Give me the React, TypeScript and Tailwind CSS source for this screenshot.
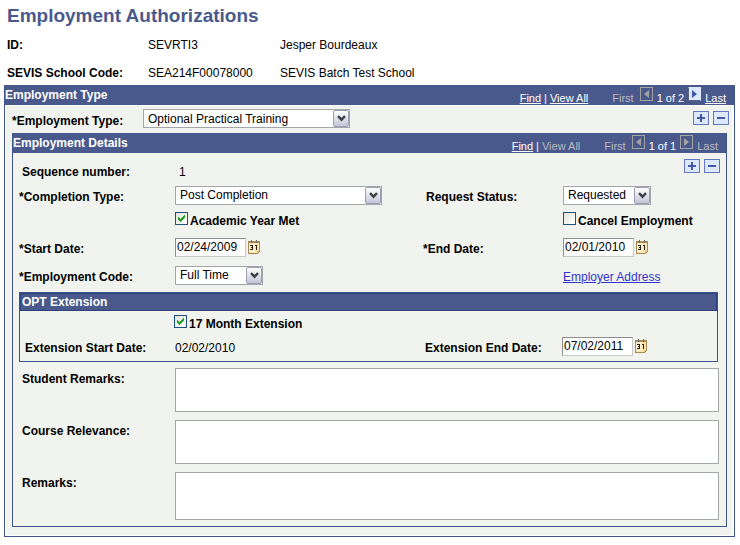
import type { ReactNode } from "react";

const LABEL = "font-bold leading-4";

type SelectFieldProps = {
  id: string;
  options: string[];
  className: string;
};

function SelectField({ id, options, className }: SelectFieldProps) {
  return (
    <div className={`relative h-[19px] ${className}`}>
      <select
        id={id}
        className="block h-full w-full appearance-none border border-[#a2a6ab] bg-white pl-1 pr-5 text-[12px] leading-4 outline-none"
      >
        {options.map((o) => (
          <option key={o}>{o}</option>
        ))}
      </select>
      <span className="pointer-events-none absolute inset-y-px right-px flex w-4 items-center justify-center rounded-xs border border-[#9b9db3] bg-linear-to-b from-white to-[#c4c5d6]">
        <svg width="9" height="7" viewBox="0 0 9 7" aria-hidden="true">
          <path d="M1 1.2l3.5 3.5L8 1.2" fill="none" stroke="#3d3f45" strokeWidth="2.4" />
        </svg>
      </span>
    </div>
  );
}

type CheckFieldProps = {
  id: string;
  label: string;
  checked?: boolean;
};

function CheckField({ id, label, checked }: CheckFieldProps) {
  return (
    <div className="flex h-[17px] items-start">
      <span className="relative block size-[13px]">
        <input
          id={id}
          type="checkbox"
          defaultChecked={checked}
          className="peer block size-[13px] appearance-none border border-[#1c5180] bg-linear-to-br from-[#e2e2dd] to-white"
        />
        <svg
          width="13"
          height="13"
          viewBox="0 0 13 13"
          shapeRendering="crispEdges"
          aria-hidden="true"
          className="pointer-events-none absolute inset-0 hidden peer-checked:block"
        >
          <path
            d="M3 5h1v1h1v1h1V6h1V5h1V4h1V3h1v3H9v1H8v1H7v1H6v1H5V9H4V8H3z"
            fill="#21a121"
          />
        </svg>
      </span>
      <label htmlFor={id} className={`${LABEL} pl-0.5 pt-px`}>
        {label}
      </label>
    </div>
  );
}

function CalendarIcon() {
  return (
    <svg width="12" height="14" viewBox="0 0 12 14" shapeRendering="crispEdges" aria-hidden="true">
      <path d="M0 1h12v10l-3 3H0z" fill="#a98a52" />
      <path d="M1 3h10v8H9v2H1z" fill="#fbe3ac" />
      <path d="M1 3h6v9H1z" fill="#fdf0cf" />
      <path d="M9 11h2l-2 2z" fill="#e2bd74" />
      <path d="M3 0h1v3H3zM8 0h1v3H8z" fill="#6d6d6d" />
      <path
        d="M2 5h3v5H2V9h2V8H3V7h1V6H2zM7 5h2v5H8V6H7z"
        fill="#2b2118"
      />
    </svg>
  );
}

function DateField({ id, value, name }: { id: string; value: string; name: string }) {
  return (
    <div className="flex items-center gap-0.5">
      <input
        id={id}
        type="text"
        defaultValue={value}
        className="block h-[19px] w-[71px] border border-[#c8c8c8] border-l-[#8e8e8e] border-t-[#8e8e8e] bg-white px-px text-[12px] leading-4 outline-none"
      />
      <button type="button" aria-label={`Choose ${name}`}>
        <CalendarIcon />
      </button>
    </div>
  );
}

function RowButtons() {
  return (
    <div className="flex gap-1">
      <button
        type="button"
        aria-label="Add a row"
        className="flex h-3.5 w-4 items-center justify-center border border-[#6476c0] bg-[#dbe8fd]"
      >
        <svg width="8" height="8" viewBox="0 0 8 8" shapeRendering="crispEdges" aria-hidden="true">
          <path d="M3 0h2v3h3v2H5v3H3V5H0V3h3z" fill="#4259a5" />
        </svg>
      </button>
      <button
        type="button"
        aria-label="Delete row"
        className="flex h-3.5 w-4 items-center justify-center border border-[#6476c0] bg-[#dbe8fd]"
      >
        <svg width="8" height="8" viewBox="0 0 8 8" shapeRendering="crispEdges" aria-hidden="true">
          <path d="M0 3h8v2H0z" fill="#4259a5" />
        </svg>
      </button>
    </div>
  );
}

function PagerArrow({ dir, enabled }: { dir: "prev" | "next"; enabled?: boolean }) {
  return (
    <button
      type="button"
      disabled={!enabled}
      aria-label={dir === "prev" ? "Previous row" : "Next row"}
      className={`-mt-[5px] flex h-3.5 w-[13px] items-center justify-center border ${
        enabled
          ? "border-[#dbe8fd] border-b-[#5d6480] border-l-[#5d6480] bg-[#dbe8fd] text-[#4259a5]"
          : "border-[#a3a3a3] text-[#a3a3a3]"
      }`}
    >
      <svg width="5" height="8" viewBox="0 0 5 8" aria-hidden="true">
        <path d={dir === "prev" ? "M5 0v8L0 4z" : "M0 0v8l5-4z"} fill="currentColor" />
      </svg>
    </button>
  );
}

type ScrollHeaderProps = {
  title: string;
  count: string;
  hasMore?: boolean;
};

function ScrollHeader({ title, count, hasMore }: ScrollHeaderProps) {
  const off = "text-[#b9bac0]";
  return (
    <header className="flex h-5 items-start justify-between bg-[#4a598c] pr-2 text-white">
      <h2 className={`${LABEL} pt-0.5`}>{title}</h2>
      <nav className="flex items-start pt-[7px] text-[11px] leading-3">
        <a href="#find" className="underline">
          Find
        </a>
        <span className="px-[3px]">|</span>
        {hasMore ? (
          <a href="#all" className="underline">
            View All
          </a>
        ) : (
          <span className={off}>View All</span>
        )}
        <span className={`${off} pl-6 pr-1.5`}>First</span>
        <PagerArrow dir="prev" />
        <span className="px-1">{count}</span>
        <PagerArrow dir="next" enabled={hasMore} />
        {hasMore ? (
          <a href="#last" className="ml-1 underline">
            Last
          </a>
        ) : (
          <span className={`${off} ml-1`}>Last</span>
        )}
      </nav>
    </header>
  );
}

function FieldRow({ className, children }: { className: string; children: ReactNode }) {
  return (
    <div className={`grid grid-cols-[156px_1fr_140px_156px] items-center ${className}`}>
      {children}
    </div>
  );
}

function RemarksField({ id, label, className }: { id: string; label: string; className: string }) {
  return (
    <div className="flex items-start">
      <label htmlFor={id} className={`${LABEL} w-[156px] shrink-0 pl-[3px] pt-[3px]`}>
        {label}
      </label>
      <textarea
        id={id}
        className={`block min-w-0 flex-1 resize-none border border-[#a2a6ab] bg-white outline-none ${className}`}
      />
    </div>
  );
}

function Details() {
  return (
    <section className="mr-0.5 border border-t-0 border-[#3f5591]">
      <ScrollHeader title="Employment Details" count="1 of 1" />
      <div className="pb-1.5 pl-1.5 pr-[7px] pt-1.5">
        <FieldRow className="h-[26px]">
          <span className={`${LABEL} pl-[3px]`}>Sequence number:</span>
          <span className="pl-1">1</span>
          <span />
          <div className="-mr-px self-start justify-self-end">
            <RowButtons />
          </div>
        </FieldRow>
        <FieldRow className="h-[19px]">
          <label htmlFor="completion" className={`${LABEL} pt-1`}>
            *Completion Type:
          </label>
          <SelectField
            id="completion"
            className="w-[207px]"
            options={["Post Completion", "Pre Completion"]}
          />
          <label htmlFor="status" className={`${LABEL} pl-[3px] pt-1`}>
            Request Status:
          </label>
          <SelectField id="status" className="w-[88px]" options={["Requested", "Approved"]} />
        </FieldRow>
        <FieldRow className="mt-2">
          <span />
          <CheckField id="academic" label="Academic Year Met" checked />
          <span />
          <CheckField id="cancel" label="Cancel Employment" />
        </FieldRow>
        <FieldRow className="mt-2 h-[19px]">
          <label htmlFor="start" className={`${LABEL} pt-1`}>
            *Start Date:
          </label>
          <DateField id="start" value="02/24/2009" name="start date" />
          <label htmlFor="end" className={`${LABEL} pt-1`}>
            *End Date:
          </label>
          <DateField id="end" value="02/01/2010" name="end date" />
        </FieldRow>
        <FieldRow className="mt-[9px] h-[19px]">
          <label htmlFor="code" className={`${LABEL} pt-1`}>
            *Employment Code:
          </label>
          <SelectField id="code" className="w-[88px]" options={["Full Time", "Part Time"]} />
          <span />
          <a href="#employer" className="justify-self-start pt-1 leading-4 text-[#3333cc] underline">
            Employer Address
          </a>
        </FieldRow>

        <section className="mr-px mt-2 border border-[#3f5591]">
          <h3 className={`${LABEL} h-[18px] border border-[#2c4279] bg-[#4a598c] pl-px text-white`}>
            OPT Extension
          </h3>
          <div className="-ml-0.5 -mr-px pb-1.5 pt-1">
            <FieldRow className="">
              <span />
              <CheckField id="extension" label="17 Month Extension" checked />
            </FieldRow>
            <FieldRow className="mt-1 h-[19px]">
              <span className={`${LABEL} pl-[7px] pt-1`}>Extension Start Date:</span>
              <span className="pl-px pt-1">02/02/2010</span>
              <label htmlFor="extend" className={`${LABEL} pl-[3px] pt-1`}>
                Extension End Date:
              </label>
              <DateField id="extend" value="07/02/2011" name="extension end date" />
            </FieldRow>
          </div>
        </section>

        <div className="mt-1.5 flex flex-col gap-2">
          <RemarksField id="student" label="Student Remarks:" className="h-11" />
          <RemarksField id="course" label="Course Relevance:" className="h-11" />
          <RemarksField id="remarks" label="Remarks:" className="h-12" />
        </div>
      </div>
    </section>
  );
}

export default function App() {
  return (
    <main className="bg-white pb-2 pl-1 pr-[5px] pt-1 font-['Liberation_Sans',Arial,sans-serif] text-[12px] leading-4 text-black">
      <h1 className="pl-[3px] text-[19px] font-bold leading-6 text-[#4a598c]">
        Employment Authorizations
      </h1>
      <dl className="grid grid-cols-[141px_132px_1fr] gap-y-3 pb-1 pl-[3px] pt-[9px]">
        <dt className="font-bold">ID:</dt>
        <dd>SEVRTI3</dd>
        <dd>Jesper Bourdeaux</dd>
        <dt className="font-bold">SEVIS School Code:</dt>
        <dd>SEA214F00078000</dd>
        <dd>SEVIS Batch Test School</dd>
      </dl>
      <section className="border border-t-0 border-[#3f5591]">
        <ScrollHeader title="Employment Type" count="1 of 2" hasMore />
        <div className="border border-r-2 border-white bg-[#f1f4ee] pb-2 pl-1.5 pr-[3px] pt-[3px]">
          <div className="flex h-6 items-start">
            <label htmlFor="type" className={`${LABEL} w-[131px] pt-1`}>
              *Employment Type:
            </label>
            <SelectField
              id="type"
              className="w-[207px]"
              options={["Optional Practical Training", "Curricular Practical Training"]}
            />
            <div className="ml-auto pt-0.5">
              <RowButtons />
            </div>
          </div>
          <Details />
        </div>
      </section>
    </main>
  );
}
